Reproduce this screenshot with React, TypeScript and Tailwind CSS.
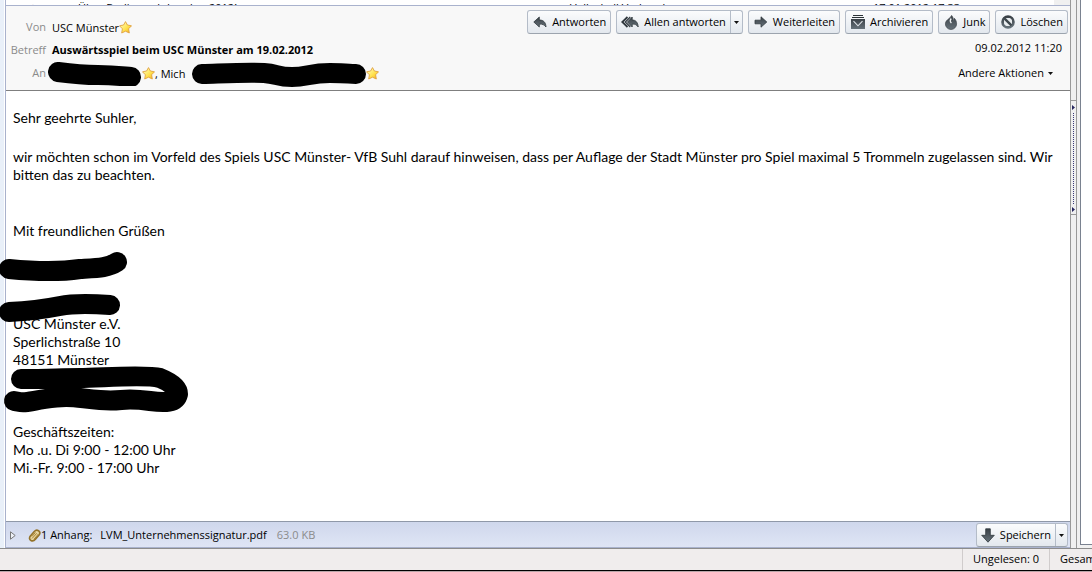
import type { ReactNode } from "react";

function Star() {
  return (
    <svg viewBox="0 0 13 13" className="size-[13px] shrink-0">
      <defs>
        <linearGradient id="star" x1="0" y1="0" x2="1" y2="1">
          <stop offset="0.2" stopColor="#fff8a0" />
          <stop offset="0.6" stopColor="#ffdf4a" />
          <stop offset="1" stopColor="#f2a81a" />
        </linearGradient>
      </defs>
      <path
        d="M6.5 0.6 8.4 4 12.5 4.8 9.6 7.8 10.3 12 6.5 10.2 2.7 12 3.4 7.8 0.5 4.8 4.6 4Z"
        fill="url(#star)"
        stroke="#e0a040"
        strokeWidth="0.9"
        strokeLinejoin="round"
      />
    </svg>
  );
}

function Caret() {
  return (
    <svg viewBox="0 0 5 3" className="h-[3px] w-[5px] shrink-0">
      <path d="M0 0H5L2.5 3Z" fill="#111" />
    </svg>
  );
}

function IconDefs() {
  return (
    <svg className="absolute size-0" aria-hidden="true">
      <defs>
        <linearGradient id="steel" x1="0" y1="0" x2="0" y2="1">
          <stop offset="0" stopColor="#3a4147" />
          <stop offset="1" stopColor="#66727a" />
        </linearGradient>
      </defs>
    </svg>
  );
}

function ReplyIcon() {
  return (
    <svg viewBox="0 0 14 14" className="size-[14px] shrink-0">
      <path
        d="M0.8 7 6.3 2V5C10.5 5 12.8 7.3 13 12 11.2 9.6 9.5 9.1 6.3 9.1V12Z"
        fill="url(#steel)"
        stroke="#30383e"
        strokeWidth="0.8"
        strokeLinejoin="round"
      />
    </svg>
  );
}

function ReplyAllIcon() {
  return (
    <svg viewBox="0 0 18 14" className="h-[14px] w-[18px] shrink-0">
      <path d="M6.5 2 1.3 7 6.5 12" fill="none" stroke="#30383e" strokeWidth="1.8" />
      <path d="M9.3 2 4.3 7 9.3 12" fill="none" stroke="#30383e" strokeWidth="1.2" />
      <path
        d="M6.4 7 11.2 2V5C14.8 5 16.9 7.3 17.2 12 15.6 9.6 14.2 9.1 11.2 9.1V12Z"
        fill="url(#steel)"
        stroke="#30383e"
        strokeWidth="0.8"
        strokeLinejoin="round"
      />
    </svg>
  );
}

function ForwardIcon() {
  return (
    <svg viewBox="0 0 14 14" className="size-[14px] shrink-0">
      <path
        d="M1 5.2H7V1.8L12.8 7 7 12.2V8.8H1Z"
        fill="url(#steel)"
        stroke="#30383e"
        strokeWidth="0.8"
        strokeLinejoin="round"
      />
    </svg>
  );
}

function ArchiveIcon() {
  return (
    <svg viewBox="0 0 14 14" className="size-[14px] shrink-0">
      <path d="M2 0H12V1H2ZM1 2H13V3H1Z" fill="#2c3338" />
      <path d="M0 4H14V14H0Z" fill="url(#steel)" />
      <path d="M2.5 6.2 7 10.8 11.5 6.2" fill="none" stroke="#dfe4e8" strokeWidth="1.1" />
    </svg>
  );
}

function JunkIcon() {
  return (
    <svg viewBox="0 0 14 15" className="h-[15px] w-[14px] shrink-0">
      <path
        d="M7.6 0.4C9.5 2.5 9.3 4 9 5.4 9.8 4.8 10.2 4 10.3 3.2 12 4.8 12.6 6.8 12.6 8.9A5.6 5.6 0 0 1 1.4 8.9C1.4 6.4 3 5.2 4.4 4 5.8 2.9 7 2 7.6 0.4Z"
        fill="url(#steel)"
        stroke="#30383e"
        strokeWidth="0.6"
      />
      <path d="M7.2 3.5C5.4 5.6 6 6.8 7.4 8.2" fill="none" stroke="#f2f5f7" strokeWidth="1.2" />
    </svg>
  );
}

function DeleteIcon() {
  return (
    <svg viewBox="0 0 14 14" className="size-[14px] shrink-0">
      <circle cx="7" cy="7" r="5.4" fill="none" stroke="url(#steel)" strokeWidth="2.8" />
      <circle cx="7" cy="7" r="4" fill="#e9edf0" />
      <path d="M3.6 3.6 10.4 10.4" stroke="#3f484e" strokeWidth="2.4" />
    </svg>
  );
}

function SaveIcon() {
  return (
    <svg viewBox="0 0 14 15" className="h-[15px] w-[14px] shrink-0">
      <path
        d="M4.7 0.8H9.3V7.3H13.3L7 14.2 0.7 7.3H4.7Z"
        fill="url(#steel)"
        stroke="#30383e"
        strokeWidth="0.8"
        strokeLinejoin="round"
      />
    </svg>
  );
}

function ClipIcon() {
  return (
    <svg viewBox="0 0 13 13" className="size-[13px] shrink-0">
      <path
        d="M2.2 7.2 6.3 2.5C8.8-.2 13.4 2 11.2 5.8L7.4 10.2C4.8 13.4-.2 11.4 2.2 7.2Z"
        fill="#ead9a4"
        stroke="#94732a"
        strokeWidth="1.7"
      />
      <path
        d="M4.3 9.2 8.5 4.6M6.2 10 10 5.4M4.2 7.2 7.2 3.8"
        fill="none"
        stroke="#a98332"
        strokeWidth="1"
        strokeLinecap="round"
      />
    </svg>
  );
}

const buttonFace =
  "flex h-6 items-center whitespace-nowrap rounded-[3px] border border-[#b4bcc8] border-b-[#9ca4ae] bg-linear-to-b from-[#fbfcfd] to-[#e3e8ee]";

function ToolButton({ icon, children }: { icon: ReactNode; children: ReactNode }) {
  return (
    <button type="button" className={`${buttonFace} gap-[5px] pr-1 pl-[5px]`}>
      {icon}
      {children}
    </button>
  );
}

function SplitButton({
  icon,
  label,
  menuLabel,
}: {
  icon: ReactNode;
  label: string;
  menuLabel: string;
}) {
  return (
    <div className={buttonFace}>
      <button type="button" className="flex h-full items-center gap-[5px] pr-1 pl-1">
        {icon}
        {label}
      </button>
      <button
        type="button"
        aria-label={menuLabel}
        className="flex h-full w-3 items-center justify-center border-l border-[#b4bcc8]"
      >
        <Caret />
      </button>
    </div>
  );
}

function MessageList() {
  return (
    <div className="flex h-[5px] shrink-0 overflow-hidden bg-white">
      <div className="flex h-[5px] min-w-0 flex-1 items-start leading-4">
        <span className="w-[72px] pl-[22px] text-[#ccc]">☆</span>
        <span className="w-[492px]">Über Berlin nach London 2012!</span>
        <span className="flex-1">Volleyball Verband</span>
        <span className="w-[181px]">17.01.2012 17:33</span>
      </div>
      <div className="h-full w-4 bg-[#f0f0f0]" />
    </div>
  );
}

function Header() {
  return (
    <header className="flex h-[86px] shrink-0 justify-between border-t border-b border-t-[#a9b2cd] border-b-[#7f7f7f] bg-[#f8f8f8]">
      <dl className="grid auto-rows-[23px] grid-cols-[40px_auto] content-start gap-x-[6px] pt-[10px] leading-[22px]">
        <dt className="text-right text-[#8b8b8b]">Von</dt>
        <dd className="flex items-center">
          USC Münster
          <Star />
        </dd>
        <dt className="text-right text-[#8b8b8b]">Betreff</dt>
        <dd className="font-bold">Auswärtsspiel beim USC Münster am 19.02.2012</dd>
        <dt className="text-right text-[#8b8b8b]">An</dt>
        <dd className="flex items-center">
          <svg viewBox="0 0 94 24" className="-ml-1 h-6 w-[94px] shrink-0">
            <path
              d="M10 10C25 12 35 13 50 13S72 14 83 15"
              fill="none"
              stroke="#000"
              strokeWidth="20"
              strokeLinecap="round"
            />
          </svg>
          <Star />
          <span className="w-[37px]">, Mich</span>
          <svg viewBox="0 0 174 26" className="h-[26px] w-[174px] shrink-0">
            <path
              d="M10 13C40 12 58 11 72 12S85 16 100 16 118 12 138 12 155 13 164 13"
              fill="none"
              stroke="#000"
              strokeWidth="20"
              strokeLinecap="round"
            />
          </svg>
          <Star />
        </dd>
      </dl>
      <div className="flex flex-col items-end pt-1 pr-[2px]">
        <div className="flex gap-[5px]">
          <ToolButton icon={<ReplyIcon />}>Antworten</ToolButton>
          <SplitButton
            icon={<ReplyAllIcon />}
            label="Allen antworten"
            menuLabel="Weitere Antwortoptionen"
          />
          <ToolButton icon={<ForwardIcon />}>Weiterleiten</ToolButton>
          <ToolButton icon={<ArchiveIcon />}>Archivieren</ToolButton>
          <ToolButton icon={<JunkIcon />}>Junk</ToolButton>
          <ToolButton icon={<DeleteIcon />}>Löschen</ToolButton>
        </div>
        <time className="mt-[6px] pr-[6px] leading-4">09.02.2012 11:20</time>
        <button type="button" className="mt-[9px] flex items-center gap-1 pr-[15px] leading-4">
          Andere Aktionen
          <Caret />
        </button>
      </div>
    </header>
  );
}

function MessageBody() {
  return (
    <article className="relative flex-1 bg-white px-[7px] pt-[18px] font-['Lato',sans-serif] text-[14px] leading-[18px]">
      <p>Sehr geehrte Suhler,</p>
      <p className="mt-[21px]">
        wir möchten schon im Vorfeld des Spiels USC Münster- VfB Suhl darauf hinweisen, dass per
        Auflage der Stadt Münster pro Spiel maximal 5 Trommeln zugelassen sind. Wir bitten das zu
        beachten.
      </p>
      <p className="mt-[38px]">Mit freundlichen Grüßen</p>
      <address className="mt-[75px] not-italic">
        USC Münster e.V.
        <br />
        Sperlichstraße 10
        <br />
        48151 Münster
      </address>
      <p className="mt-[54px]">
        Geschäftszeiten:
        <br />
        Mo .u. Di 9:00 - 12:00 Uhr
        <br />
        Mi.-Fr. 9:00 - 17:00 Uhr
      </p>
      {/* blacked-out name, function and contact lines */}
      <svg
        viewBox="0 0 200 180"
        className="absolute top-[149px] -left-[6px] h-[180px] w-[200px]"
        aria-hidden="true"
      >
        <g fill="none" stroke="#000" strokeWidth="20" strokeLinecap="round" strokeLinejoin="round">
          <path d="M9 29C30 31 60 32 80 29 98 28 108 28 117 22" />
          <path d="M9 72C30 71 45 69 60 66S95 64 110 65" />
          <path d="M21 139C50 139 60 138 80 138S145 134 160 138C170 142 178 148 178 154 176 163 165 163 150 161 120 157 125 162 100 160S70 155 45 159 25 163 14 161" />
        </g>
      </svg>
    </article>
  );
}

function AttachmentBar() {
  return (
    <section className="flex h-[27px] shrink-0 items-center border-t border-b border-t-[#8f98a8] border-b-[#a9b2cd] bg-linear-to-b from-[#cfd7ec] to-[#dfe5f5] pt-px pr-[2px] pl-1">
      <button type="button" aria-label="Anhänge einblenden" className="mr-3 flex">
        <svg viewBox="0 0 6 9" className="h-[9px] w-[6px]">
          <path d="M0.5 0.8 5.2 4.5 0.5 8.2Z" fill="#eef1f8" stroke="#777" strokeWidth="1" />
        </svg>
      </button>
      <ClipIcon />
      <span>1 Anhang:</span>
      <a href="#anhang" className="ml-2">
        LVM_Unternehmenssignatur.pdf
      </a>
      <span className="ml-[10px] text-[#8b8b8b]">63.0 KB</span>
      <div className="ml-auto">
        <SplitButton icon={<SaveIcon />} label="Speichern" menuLabel="Weitere Speicheroptionen" />
      </div>
    </section>
  );
}

function Splitter() {
  return (
    <div className="flex w-[7px] shrink-0 flex-col border-r border-l border-r-[#999] border-l-[#999] bg-[#f0f0f0] pt-[100px]">
      <div className="flex h-[115px] flex-col items-center justify-between border-t border-b border-[#999] pt-1 pb-[2px]">
        <svg viewBox="0 0 3 5" className="h-[5px] w-[3px]">
          <path d="M0 0 3 2.5 0 5Z" fill="#26265e" />
        </svg>
        <div className="h-[91px] border-l border-dotted border-[#3a3a78]" />
        <svg viewBox="0 0 3 5" className="h-[5px] w-[3px]">
          <path d="M0 0 3 2.5 0 5Z" fill="#26265e" />
        </svg>
      </div>
    </div>
  );
}

function StatusBar() {
  return (
    <footer className="flex h-[22px] shrink-0 justify-end overflow-hidden border-t border-[#8c8c8c] bg-[#f0eded] leading-5">
      <span className="w-[87px] border-l border-[#d0cccc] pl-[10px]">Ungelesen: 0</span>
      <span className="w-[43px] overflow-hidden border-l border-[#d0cccc] pl-[10px]">Gesamt</span>
    </footer>
  );
}

export default function App() {
  return (
    <div className="flex h-screen flex-col overflow-hidden bg-[#f0f0f0] font-['Open_Sans',sans-serif] text-[11px] text-black">
      <IconDefs />
      <main className="flex min-h-0 flex-1">
        <div className="w-[5px] shrink-0 border-r border-white bg-[#e9f0f9]" />
        <div className="flex min-w-0 flex-1 flex-col border-l border-[#a9b2cd]">
          <MessageList />
          <Header />
          <MessageBody />
          <AttachmentBar />
        </div>
        <Splitter />
        <aside className="flex w-[15px] shrink-0 pb-[3px] pl-[3px]">
          <div className="flex-1 border-b border-l border-[#7a8290] bg-white" />
        </aside>
      </main>
      <StatusBar />
      <div className="h-[2px] shrink-0 border-t border-black bg-[#b9a5a8]" />
    </div>
  );
}
